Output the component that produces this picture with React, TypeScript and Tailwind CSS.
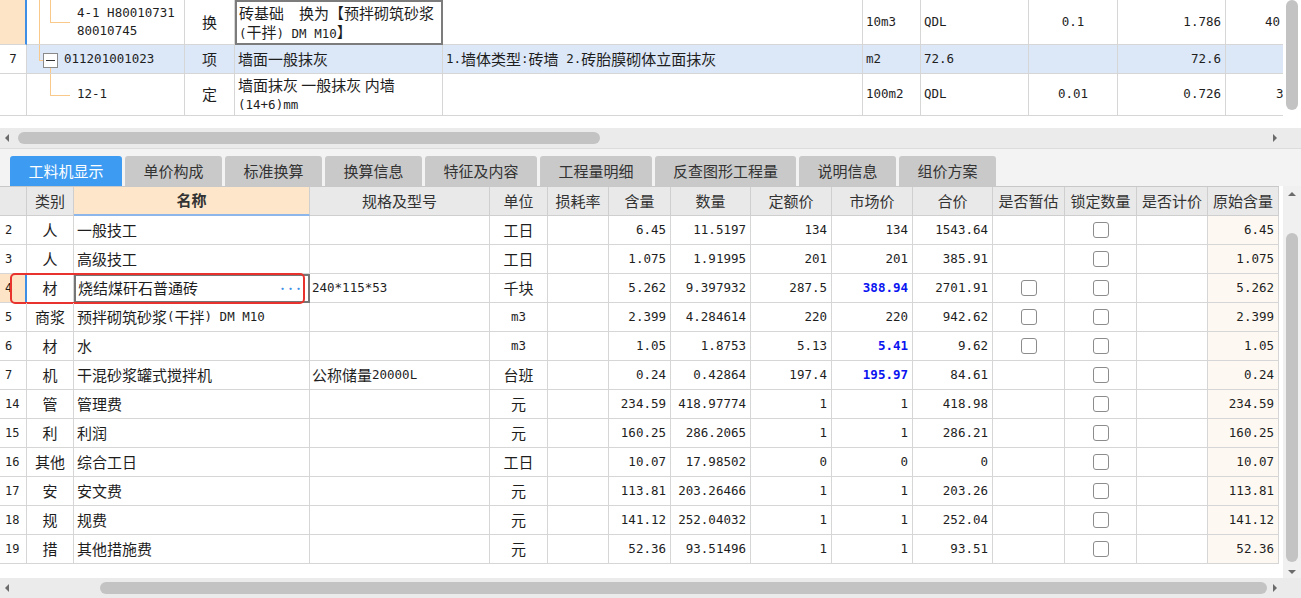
import React from 'react';

const MONO = "font-['DejaVu_Sans_Mono',monospace] text-[12.5px]";
const CELL = 'border-r border-b border-[#d6d6d6] flex items-center overflow-hidden whitespace-nowrap';

// split text into CJK runs and ascii runs, ascii gets the narrow mono font
const Mixed: React.FC<{ text: string }> = ({ text }) => {
  const parts = text.split(/([\x20-\x7e]+)/).filter((p) => p !== '');
  return (
    <>
      {parts.map((p, i) =>
        /^[\x20-\x7e]+$/.test(p) ? (
          <span key={i} className={`${MONO} whitespace-pre`}>{p}</span>
        ) : (
          <span key={i}>{p}</span>
        )
      )}
    </>
  );
};

const Check: React.FC = () => (
  <div className="w-[16px] h-[16px] rounded-[3px] border border-[#8c8c8c] bg-white"></div>
);

const Tri: React.FC<{ dir: 'left' | 'right' | 'up' | 'down' }> = ({ dir }) => {
  const pts = {
    left: '6,1 6,9 2,5',
    right: '2,1 2,9 6,5',
    up: '1,6 9,6 5,2',
    down: '1,3 9,3 5,7',
  }[dir];
  return (
    <svg width="10" height="10" viewBox="0 0 10 10">
      <polygon points={pts} fill="#6b6b6b" />
    </svg>
  );
};

const HScroll: React.FC<{ thumbLeft: number; thumbWidth: number }> = ({ thumbLeft, thumbWidth }) => (
  <div className="h-[20px] bg-[#ebebeb] flex items-center relative">
    <div className="absolute left-[3px] top-[5px]"><Tri dir="left" /></div>
    <div
      className="absolute top-[4px] h-[12px] rounded-full bg-[#c3c3c3]"
      style={{ left: thumbLeft, width: thumbWidth }}
    ></div>
    <div className="absolute left-[1271px] top-[5px]"><Tri dir="right" /></div>
  </div>
);

type Item = {
  no: string;
  cat: string;
  name: string;
  spec?: string;
  unit: string;
  qty: string;
  amount: string;
  quota: string;
  market: string;
  blue?: boolean;
  total: string;
  est?: boolean;
  orig: string;
};

const items: Item[] = [
  { no: '2', cat: '人', name: '一般技工', unit: '工日', qty: '6.45', amount: '11.5197', quota: '134', market: '134', total: '1543.64', orig: '6.45' },
  { no: '3', cat: '人', name: '高级技工', unit: '工日', qty: '1.075', amount: '1.91995', quota: '201', market: '201', total: '385.91', orig: '1.075' },
  { no: '4', cat: '材', name: '烧结煤矸石普通砖', spec: '240*115*53', unit: '千块', qty: '5.262', amount: '9.397932', quota: '287.5', market: '388.94', blue: true, total: '2701.91', est: true, orig: '5.262' },
  { no: '5', cat: '商浆', name: '预拌砌筑砂浆(干拌) DM M10', unit: 'm3', qty: '2.399', amount: '4.284614', quota: '220', market: '220', total: '942.62', est: true, orig: '2.399' },
  { no: '6', cat: '材', name: '水', unit: 'm3', qty: '1.05', amount: '1.8753', quota: '5.13', market: '5.41', blue: true, total: '9.62', est: true, orig: '1.05' },
  { no: '7', cat: '机', name: '干混砂浆罐式搅拌机', spec: '公称储量20000L', unit: '台班', qty: '0.24', amount: '0.42864', quota: '197.4', market: '195.97', blue: true, total: '84.61', orig: '0.24' },
  { no: '14', cat: '管', name: '管理费', unit: '元', qty: '234.59', amount: '418.97774', quota: '1', market: '1', total: '418.98', orig: '234.59' },
  { no: '15', cat: '利', name: '利润', unit: '元', qty: '160.25', amount: '286.2065', quota: '1', market: '1', total: '286.21', orig: '160.25' },
  { no: '16', cat: '其他', name: '综合工日', unit: '工日', qty: '10.07', amount: '17.98502', quota: '0', market: '0', total: '0', orig: '10.07' },
  { no: '17', cat: '安', name: '安文费', unit: '元', qty: '113.81', amount: '203.26466', quota: '1', market: '1', total: '203.26', orig: '113.81' },
  { no: '18', cat: '规', name: '规费', unit: '元', qty: '141.12', amount: '252.04032', quota: '1', market: '1', total: '252.04', orig: '141.12' },
  { no: '19', cat: '措', name: '其他措施费', unit: '元', qty: '52.36', amount: '93.51496', quota: '1', market: '1', total: '93.51', orig: '52.36' },
];

const headers = ['', '类别', '名称', '规格及型号', '单位', '损耗率', '含量', '数量', '定额价', '市场价', '合价', '是否暂估', '锁定数量', '是否计价', '原始含量'];

const tabs = [
  { label: '工料机显示', w: 'w-[112px]' },
  { label: '单价构成', w: 'w-[97px]' },
  { label: '标准换算', w: 'w-[97px]' },
  { label: '换算信息', w: 'w-[97px]' },
  { label: '特征及内容', w: 'w-[112px]' },
  { label: '工程量明细', w: 'w-[112px]' },
  { label: '反查图形工程量', w: 'w-[141px]' },
  { label: '说明信息', w: 'w-[97px]' },
  { label: '组价方案', w: 'w-[97px]' },
];

const BOTTOM_COLS = 'grid grid-cols-[27px_47px_236px_180px_58px_61px_62px_80px_81px_81px_80px_72px_72px_71px_71px]';
const TOP_COLS = 'grid grid-cols-[27px_158px_50px_208px_420px_58px_108px_89px_108px_100px]';

const Line: React.FC<{ className: string }> = ({ className }) => (
  <span className={`absolute bg-[#f8c98a] ${className}`}></span>
);

const App: React.FC = () => {
  return (
    <div className="w-[1301px] h-[598px] overflow-hidden bg-white flex flex-col text-[15px] text-[#1e1e1e] font-['Noto_Sans_CJK_SC',sans-serif]">
      {/* Top: quota tree table */}
      <div className="flex h-[116px]">
        <div className="w-[1283px] overflow-hidden">
          <div className={`${TOP_COLS} w-[1326px]`}>
            {/* row 4-1 */}
            <div className="h-[45px] bg-[#fde4c6] border-r-2 border-r-[#3f8ee6] border-b border-[#d6d6d6]"></div>
            <div className={`${CELL} relative pl-[50px]`}>
              <Line className="left-[12px] top-0 w-px h-[45px]" />
              <Line className="left-[23px] top-0 w-px h-[22px]" />
              <Line className="left-[23px] top-[22px] w-[20px] h-px" />
              <div className="leading-[18px]">
                <div className={MONO}>4-1 H80010731</div>
                <div className={MONO}>80010745</div>
              </div>
            </div>
            <div className={`${CELL} justify-center`}>换</div>
            <div className="h-[45px] border-2 border-[#7c7c7c] pl-[2px] flex flex-col justify-center leading-[19px] whitespace-nowrap">
              <div>砖基础　换为【预拌砌筑砂浆</div>
              <div><Mixed text="(干拌) DM M10" />】</div>
            </div>
            <div className={CELL}></div>
            <div className={`${CELL} pl-[3px] ${MONO}`}>10m3</div>
            <div className={`${CELL} pl-[3px] ${MONO}`}>QDL</div>
            <div className={`${CELL} justify-center ${MONO}`}>0.1</div>
            <div className={`${CELL} justify-end pr-[4px] ${MONO}`}>1.786</div>
            <div className={`${CELL} pl-[39px] ${MONO}`}>40</div>

            {/* row 7 */}
            <div className={`${CELL} h-[29px] justify-center ${MONO}`}>7</div>
            <div className={`${CELL} relative pl-[37px] bg-[#dce7f7]`}>
              <Line className="left-[12px] top-0 w-px h-[15px]" />
              <Line className="left-[12px] top-[15px] w-[4px] h-px" />
              <Line className="left-[23px] top-[23px] w-px h-[6px]" />
              <span className="absolute left-[16px] top-[8px] w-[15px] h-[15px] border border-[#8a8a8a] bg-white flex items-center justify-center">
                <span className="w-[9px] h-px bg-[#333]"></span>
              </span>
              <span className={MONO}>011201001023</span>
            </div>
            <div className={`${CELL} justify-center bg-[#dce7f7]`}>项</div>
            <div className={`${CELL} pl-[3px] bg-[#dce7f7]`}>墙面一般抹灰</div>
            <div className={`${CELL} pl-[3px] bg-[#dce7f7]`}><Mixed text="1.墙体类型:砖墙 2.砖胎膜砌体立面抹灰" /></div>
            <div className={`${CELL} pl-[3px] bg-[#dce7f7] ${MONO}`}>m2</div>
            <div className={`${CELL} pl-[3px] bg-[#dce7f7] ${MONO}`}>72.6</div>
            <div className={`${CELL} bg-[#dce7f7]`}></div>
            <div className={`${CELL} justify-end pr-[4px] bg-[#dce7f7] ${MONO}`}>72.6</div>
            <div className={`${CELL} bg-[#dce7f7]`}></div>

            {/* row 12-1 */}
            <div className={`${CELL} h-[42px]`}></div>
            <div className={`${CELL} relative pl-[50px]`}>
              <Line className="left-[23px] top-0 w-px h-[21px]" />
              <Line className="left-[23px] top-[21px] w-[20px] h-px" />
              <span className={MONO}>12-1</span>
            </div>
            <div className={`${CELL} justify-center`}>定</div>
            <div className={`${CELL} pl-[3px] leading-[18px]`}>
              <div>
                <div>墙面抹灰 一般抹灰 内墙</div>
                <div><Mixed text="(14+6)mm" /></div>
              </div>
            </div>
            <div className={CELL}></div>
            <div className={`${CELL} pl-[3px] ${MONO}`}>100m2</div>
            <div className={`${CELL} pl-[3px] ${MONO}`}>QDL</div>
            <div className={`${CELL} justify-center ${MONO}`}>0.01</div>
            <div className={`${CELL} justify-end pr-[4px] ${MONO}`}>0.726</div>
            <div className={`${CELL} pl-[50px] ${MONO}`}>3</div>
          </div>
        </div>
        <div className="w-[18px] bg-white relative">
          <div className="absolute left-[3px] top-0 w-[12px] h-[110px] rounded-full bg-[#c3c3c3]"></div>
        </div>
      </div>

      <div className="h-[12px] bg-white"></div>
      <HScroll thumbLeft={18} thumbWidth={582} />

      {/* Tabs */}
      <div className="h-[38px] bg-[#f3f3f3] border-t border-[#dcdcdc] flex items-end pl-[10px] gap-[3px]">
        {tabs.map((t, i) => (
          <div
            key={t.label}
            className={`${t.w} h-[30px] rounded-t-[3px] flex items-center justify-center ${
              i === 0 ? 'bg-[#3d9cf2] text-white' : 'bg-[#c9c9c9] text-[#333]'
            }`}
          >
            {t.label}
          </div>
        ))}
      </div>

      {/* Bottom: resource table */}
      <div className="flex h-[392px]">
        <div className="w-[1283px] overflow-hidden">
          <div className={`${BOTTOM_COLS} w-[1279px] border-t border-[#c8c8c8]`}>
            {headers.map((h, i) => (
              <div
                key={i}
                className={`h-[29px] border-r border-b border-[#cfcfcf] flex items-center justify-center whitespace-nowrap text-[#333] ${
                  i === 2 ? 'bg-[#fde6c9] font-bold border-b-2 border-b-[#8db7ea]' : 'bg-[#e9e9e9]'
                }`}
              >
                {h}
              </div>
            ))}
          </div>
          {items.map((r) => {
            const sel = r.no === '4';
            return (
              <div key={r.no} className={`${BOTTOM_COLS} w-[1279px] h-[29px] relative`}>
                <div
                  className={`${CELL} pl-[5px] ${MONO} text-[12px] ${
                    sel ? 'bg-[#fde4c6] border-r-2 border-r-[#3f8ee6]' : ''
                  }`}
                >
                  {r.no}
                </div>
                <div className={`${CELL} justify-center`}>{r.cat}</div>
                {sel ? (
                  <div className="border-2 border-[#767676] flex items-center justify-between pl-[2px] pr-[6px] whitespace-nowrap">
                    <span>{r.name}</span>
                    <span className="text-[#3b8ee6] text-[9px] font-bold tracking-[-1px]">•••</span>
                  </div>
                ) : (
                  <div className={`${CELL} pl-[3px]`}><Mixed text={r.name} /></div>
                )}
                <div className={`${CELL} pl-[2px]`}>{r.spec ? <Mixed text={r.spec} /> : null}</div>
                <div className={`${CELL} justify-center`}><Mixed text={r.unit} /></div>
                <div className={CELL}></div>
                <div className={`${CELL} justify-end pr-[4px] ${MONO}`}>{r.qty}</div>
                <div className={`${CELL} justify-end pr-[4px] ${MONO}`}>{r.amount}</div>
                <div className={`${CELL} justify-end pr-[4px] ${MONO}`}>{r.quota}</div>
                <div
                  className={`${CELL} justify-end pr-[4px] ${MONO} ${r.blue ? 'text-[#0a14f0] font-bold' : ''}`}
                >
                  {r.market}
                </div>
                <div className={`${CELL} justify-end pr-[4px] ${MONO}`}>{r.total}</div>
                <div className={`${CELL} justify-center`}>{r.est ? <Check /> : null}</div>
                <div className={`${CELL} justify-center`}><Check /></div>
                <div className={CELL}></div>
                <div className={`${CELL} justify-end pr-[4px] bg-[#fdf9f2] ${MONO}`}>{r.orig}</div>
                {sel && (
                  <div className="absolute left-[10px] top-[-1px] w-[295px] h-[31px] border-2 border-[#e8322d] rounded-[5px]"></div>
                )}
              </div>
            );
          })}
        </div>
        <div className="w-[18px] bg-[#f0f0f0] relative">
          <div className="absolute left-[4px] top-[4px]"><Tri dir="up" /></div>
          <div className="absolute left-[3px] top-[47px] w-[12px] h-[329px] rounded-full bg-[#c3c3c3]"></div>
          <div className="absolute left-[4px] top-[381px]"><Tri dir="down" /></div>
        </div>
      </div>

      <HScroll thumbLeft={100} thumbWidth={1167} />
    </div>
  );
};

export default App;
